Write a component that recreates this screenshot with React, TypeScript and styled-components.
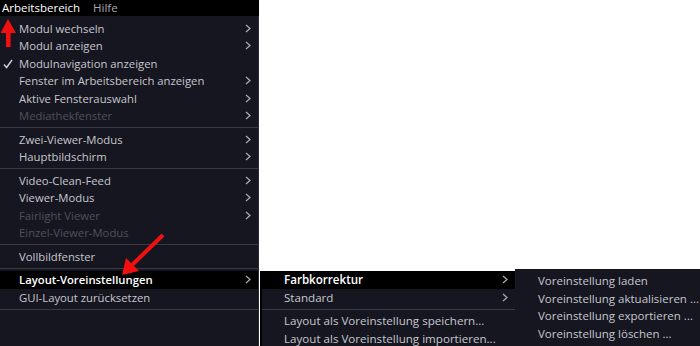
import styled, { createGlobalStyle } from "styled-components";

const GlobalStyle = createGlobalStyle`
  html, body {
    margin: 0;
    padding: 0;
    background: #fff;
  }
  body {
    font-family: "Open Sans", "Noto Sans", "DejaVu Sans", sans-serif;
  }
`;

type RowState = "normal" | "disabled" | "active";

type Entry =
  | { kind: "sep" }
  | { kind: "item"; label: string; sub?: boolean; state?: RowState; checked?: boolean };

const mainEntries: Entry[] = [
  { kind: "item", label: "Modul wechseln", sub: true },
  { kind: "item", label: "Modul anzeigen", sub: true },
  { kind: "item", label: "Modulnavigation anzeigen", checked: true },
  { kind: "item", label: "Fenster im Arbeitsbereich anzeigen", sub: true },
  { kind: "item", label: "Aktive Fensterauswahl", sub: true },
  { kind: "item", label: "Mediathekfenster", sub: true, state: "disabled" },
  { kind: "sep" },
  { kind: "item", label: "Zwei-Viewer-Modus", sub: true },
  { kind: "item", label: "Hauptbildschirm", sub: true },
  { kind: "sep" },
  { kind: "item", label: "Video-Clean-Feed", sub: true },
  { kind: "item", label: "Viewer-Modus", sub: true },
  { kind: "item", label: "Fairlight Viewer", sub: true, state: "disabled" },
  { kind: "item", label: "Einzel-Viewer-Modus", state: "disabled" },
  { kind: "sep" },
  { kind: "item", label: "Vollbildfenster" },
  { kind: "sep" },
  { kind: "item", label: "Layout-Voreinstellungen", sub: true, state: "active" },
  { kind: "item", label: "GUI-Layout zurücksetzen" },
  { kind: "sep" },
];

const layoutEntries: Entry[] = [
  { kind: "item", label: "Farbkorrektur", sub: true, state: "active" },
  { kind: "item", label: "Standard", sub: true },
  { kind: "sep" },
  { kind: "item", label: "Layout als Voreinstellung speichern..." },
  { kind: "item", label: "Layout als Voreinstellung importieren..." },
];

const presetEntries: Entry[] = [
  { kind: "item", label: "Voreinstellung laden" },
  { kind: "item", label: "Voreinstellung aktualisieren ..." },
  { kind: "item", label: "Voreinstellung exportieren ..." },
  { kind: "item", label: "Voreinstellung löschen ..." },
];

const Chevron = () => (
  <ChevronIcon width="6" height="9" viewBox="0 0 6 9">
    <polyline points="1,1 5,4.5 1,8" fill="none" stroke="currentColor" strokeWidth="1.3" />
  </ChevronIcon>
);

const CheckMark = () => (
  <CheckIcon width="10" height="10" viewBox="0 0 10 10">
    <polyline points="1,5.5 3.6,8.5 9,1" fill="none" stroke="#d0d0d6" strokeWidth="1.4" />
  </CheckIcon>
);

const MenuList = ({ entries, indent, size }: { entries: Entry[]; indent: number; size: number }) => (
  <>
    {entries.map((e, i) =>
      e.kind === "sep" ? (
        <Separator key={i} />
      ) : (
        <Row key={i} $state={e.state ?? "normal"} $indent={indent} $size={size}>
          {e.checked && <CheckMark />}
          <Label>{e.label}</Label>
          {e.sub && <Chevron />}
        </Row>
      )
    )}
  </>
);

export default function App() {
  return (
    <Screen>
      <GlobalStyle />
      <MainColumn>
        <MenuBar>
          <BarItem $active>Arbeitsbereich</BarItem>
          <BarItem>Hilfe</BarItem>
        </MenuBar>
        <MainPanel>
          <MenuList entries={mainEntries} indent={19} size={11.3} />
        </MainPanel>
      </MainColumn>

      <LayoutSubmenu>
        <MenuList entries={layoutEntries} indent={22} size={11.6} />
      </LayoutSubmenu>

      <PresetSubmenu>
        <MenuList entries={presetEntries} indent={23} size={11.5} />
      </PresetSubmenu>

      <Annotations width="700" height="346" viewBox="0 0 700 346">
        <polygon points="8,19 0.5,33 16,33" fill="#f01010" />
        <rect x="6" y="32" width="4.6" height="15" fill="#f01010" />
        <line x1="163" y1="235" x2="131" y2="266" stroke="#f01010" strokeWidth="4" />
        <polygon points="122,275 126,258 139,271" fill="#f01010" />
      </Annotations>
    </Screen>
  );
}

const Screen = styled.div`
  position: relative;
  width: 700px;
  height: 346px;
  overflow: hidden;
  background: #fff;
`;

const MainColumn = styled.div`
  width: 259px;
  height: 100%;
  display: flex;
  flex-direction: column;
`;

const MenuBar = styled.div`
  height: 16px;
  background: #000;
  display: flex;
  align-items: center;
  gap: 13px;
  padding-left: 2px;
`;

const BarItem = styled.span<{ $active?: boolean }>`
  font-size: 11.5px;
  line-height: 16px;
  color: ${({ $active }) => ($active ? "#ffffff" : "#a9a9b2")};
  font-weight: ${({ $active }) => ($active ? 500 : 400)};
`;

const MainPanel = styled.div`
  flex: 1;
  background: #161620;
  border-right: 1px solid #2a2a36;
  padding-top: 3.5px;
`;

const Submenu = styled.div`
  position: absolute;
  background: #161620;
  border-left: 2px solid #000;
`;

const LayoutSubmenu = styled(Submenu)`
  left: 260px;
  top: 271px;
  width: 253px;
  height: 80px;
  border-right: 2px solid #000;
`;

const PresetSubmenu = styled(Submenu)`
  left: 515px;
  top: 269px;
  width: 200px;
  height: 80px;
  padding-top: 3px;
  border-left: none;
`;

const Row = styled.div<{ $state: RowState; $indent: number; $size: number }>`
  position: relative;
  height: 17.5px;
  display: flex;
  align-items: center;
  padding: 0 7px 0 ${({ $indent }) => $indent}px;
  font-size: ${({ $size }) => $size}px;
  white-space: nowrap;
  background: ${({ $state }) => ($state === "active" ? "#000" : "transparent")};
  color: ${({ $state }) =>
    $state === "active" ? "#ffffff" : $state === "disabled" ? "#50505b" : "#c6c6ce"};
  font-weight: ${({ $state }) => ($state === "active" ? 600 : 400)};
`;

const Label = styled.span`
  flex: 1;
`;

const ChevronIcon = styled.svg`
  flex: none;
  color: #a8a8b0;
`;

const CheckIcon = styled.svg`
  position: absolute;
  left: 3px;
  top: 4px;
`;

const Separator = styled.div`
  height: 6px;
  display: flex;
  align-items: center;

  &::after {
    content: "";
    flex: 1;
    height: 1px;
    background: #3a3a46;
  }
`;

const Annotations = styled.svg`
  position: absolute;
  left: 0;
  top: 0;
  pointer-events: none;
`;
